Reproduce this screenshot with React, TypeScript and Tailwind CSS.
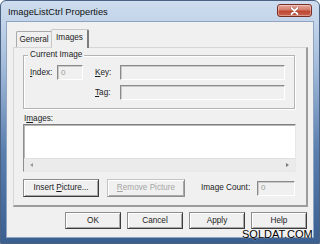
import React from "react";

const font = { fontFamily: '"Liberation Sans", Arial, sans-serif' };

function Edit({ w, value, h = 15 }: { w: string; value?: string; h?: number }) {
  return (
    <div
      className={`${w} ${h === 15 ? "h-[15px]" : "h-[14px]"} border border-t-[#8a8a8a] border-l-[#8a8a8a] border-r-white border-b-white shadow-[inset_1px_1px_0_#c9c9c9] bg-[#f0f0f0] flex items-center pl-[3px] text-[8px] leading-[10px] text-[#9a9a9a]`}
    >
      {value}
    </div>
  );
}

function Btn({
  w,
  children,
  disabled,
  h = "h-[18px]",
}: {
  w: string;
  children: React.ReactNode;
  disabled?: boolean;
  h?: string;
}) {
  return (
    <div
      className={`${w} ${h} flex items-center justify-center text-[8.2px] leading-[10px] border ${
        disabled
          ? "border-t-[#c4c4c4] border-l-[#c4c4c4] border-r-[#8e8e8e] border-b-[#8e8e8e] text-[#a6a6a6]"
          : "border-t-[#8d8d8d] border-l-[#8d8d8d] border-r-[#3c3c3c] border-b-[#3c3c3c] text-[#1c1c1c]"
      } shadow-[inset_1px_1px_0_#ffffff,inset_-1px_-1px_0_#a8a8a8] bg-[#f0f0f0]`}
    >
      <span className="whitespace-pre">{children}</span>
    </div>
  );
}

export default function App() {
  return (
    <div className="w-[320px] h-[244px] bg-white relative overflow-hidden" style={font}>
      <div className="w-[320px] h-[244px] rounded-t-[6px] border border-[#4b6282] flex flex-col bg-[linear-gradient(to_bottom,#cddcee_0px,#c2d4ea_22px,#a7bfdd_60px,#5a7eae_150px,#3a5e90_244px)]">
        {/* title bar */}
        <div className="h-[21px] flex items-start justify-between">
          <span className="mt-[5px] ml-[7px] text-[9.3px] leading-[12px] text-[#111]">
            ImageListCtrl Properties
          </span>
          <div className="mt-[3px] mr-[7px] w-[35px] h-[13px] rounded-[3px] border border-[#7a2e25] bg-[linear-gradient(to_bottom,#e6a89b_0%,#d47d6c_45%,#be4530_55%,#c9654f_100%)] flex items-center justify-center shadow-[inset_0_0_0_1px_rgba(255,255,255,0.35)]">
            <svg width="9" height="8" viewBox="0 0 9 8">
              <path d="M1.5 1 L7.5 7 M7.5 1 L1.5 7" stroke="#6b2a22" strokeWidth="3" strokeLinecap="round" opacity="0.5" />
              <path d="M1.5 1 L7.5 7 M7.5 1 L1.5 7" stroke="#ffffff" strokeWidth="1.8" strokeLinecap="round" />
            </svg>
          </div>
        </div>
        {/* body */}
        <div className="flex-1 px-[6px] pb-[6px]">
          <div className="w-[306px] h-[215px] bg-[#f0f0f0] shadow-[0_0_0_1px_#8ea4c0] flex flex-col pl-[6px] pt-[7px] text-[#1c1c1c]">
            {/* tabs */}
            <div className="h-[18px] flex items-end ml-[3px]">
              <div className="w-[35px] h-[16px] border-t border-l border-[#a9a9a9] rounded-tl-[2px] flex items-center justify-center text-[8.2px] leading-[10px] pt-[1px]">
                General
              </div>
              <div className="relative z-10 w-[38px] h-[19px] -mb-[1px] bg-[#f0f0f0] border-t border-l border-t-[#c8c8c8] border-l-[#c8c8c8] border-r-2 border-r-[#7c7c7c] rounded-t-[2px] flex items-start justify-center pt-[3px] text-[8.2px] leading-[10px]">
                Images
              </div>
            </div>
            {/* panel */}
            <div className="w-[295px] h-[160px] border-t border-l border-t-[#d6d6d6] border-l-[#d6d6d6] border-r-2 border-b-2 border-r-[#9c9c9c] border-b-[#9c9c9c] pl-[9px] pt-[7px] flex flex-col">
              {/* group box */}
              <div className="relative w-[272px] h-[54px] border border-[#b4b4b4] shadow-[inset_1px_1px_0_#ffffff,1px_1px_0_#ffffff] pt-[9px] pl-[6px]">
                <span className="absolute -top-[6px] left-[4px] px-[2px] bg-[#f0f0f0] text-[8.2px] leading-[10px]">
                  Current Image
                </span>
                <div className="flex items-center h-[15px] text-[8.2px] leading-[10px]">
                  <span className="w-[27px]">
                    <u>I</u>ndex:
                  </span>
                  <Edit w="w-[26px]" value="0" />
                  <span className="w-[12px]" />
                  <span className="w-[25px]">
                    <u>K</u>ey:
                  </span>
                  <Edit w="w-[165px]" />
                </div>
                <div className="mt-[5px] flex items-center h-[15px] pl-[65px] text-[8.2px] leading-[10px]">
                  <span className="w-[25px]">
                    <u>T</u>ag:
                  </span>
                  <Edit w="w-[165px]" />
                </div>
              </div>
              {/* images label */}
              <div className="mt-[4px] ml-[1px] h-[11px] text-[8.2px] leading-[11px]">
                I<u>m</u>ages:
              </div>
              {/* list */}
              <div className="w-[273px] h-[48px] border border-t-[#7e7e7e] border-l-[#8e8e8e] border-r-[#e8e8e8] border-b-[#e8e8e8] shadow-[inset_1px_1px_0_#b8b8b8] bg-white flex flex-col">
                <div className="flex-1" />
                <div className="h-[13px] bg-[#ebebeb] border-t border-[#e0e0e0] flex items-center justify-between px-[6px]">
                  <div className="w-0 h-0 border-y-[2.5px] border-y-transparent border-r-[3px] border-r-[#9a9a9a]" />
                  <div className="w-0 h-0 border-y-[2.5px] border-y-transparent border-l-[3px] border-l-[#7a7a7a]" />
                </div>
              </div>
              {/* button row */}
              <div className="mt-[7px] flex items-center h-[18px]">
                <Btn w="w-[76px]">
                  <>Insert <u>P</u>icture...</>
                </Btn>
                <div className="ml-[8px]">
                  <Btn w="w-[78px]" disabled>
                    <>
                      <u>R</u>emove Picture
                    </>
                  </Btn>
                </div>
                <span className="ml-[16px] w-[56px] text-[8.2px] leading-[10px]">Image Count:</span>
                <Edit w="w-[38px]" value="0" />
              </div>
            </div>
            {/* bottom buttons */}
            <div className="mt-[5px] ml-[52px] flex gap-[6px]">
              <Btn w="w-[56px]" h="h-[17px]">OK</Btn>
              <Btn w="w-[56px]" h="h-[17px]">Cancel</Btn>
              <Btn w="w-[56px]" h="h-[17px]">Apply</Btn>
              <Btn w="w-[56px]" h="h-[17px]">Help</Btn>
            </div>
          </div>
        </div>
      </div>
      <span className="absolute left-[242px] top-[228px] text-[11px] leading-[12px] text-black [text-shadow:0_0_1px_#fff]">
        SQLDAT.COM
      </span>
    </div>
  );
}
